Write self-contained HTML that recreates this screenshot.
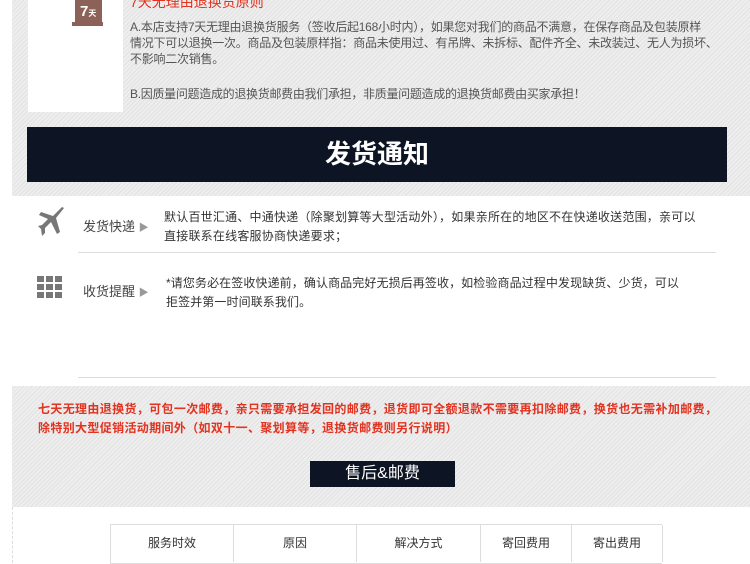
<!DOCTYPE html>
<html><head><meta charset="utf-8"><style>
body{margin:0;width:750px;height:563px;overflow:hidden;background:#fff;font-family:"Liberation Sans","Noto Sans CJK SC",sans-serif;position:relative}
.stripe{position:absolute;background:repeating-linear-gradient(135deg,#eeeeee 0 2px,#e2e2e2 2px 3px)}
.abs{position:absolute;white-space:nowrap}
.t{font-size:12px;color:#555;line-height:16px;letter-spacing:-0.3px}
.c{position:absolute;top:0;height:37px;line-height:37px;text-align:center;border-right:1px solid #ddd}
</style></head><body>
<div class="stripe" style="left:12px;top:0;width:738px;height:196px"></div>
<div class="abs" style="left:28px;top:0;width:95px;height:112px;background:#fff"></div>
<div class="abs" style="left:75px;top:0;width:27px;height:24px;background:#8c6258;border-radius:0 0 2px 2px"></div>
<div class="abs" style="left:72px;top:22px;width:31px;height:4px;background:#8c6258"></div>
<div class="abs" style="left:80px;top:3px;color:#fff;font-weight:bold;font-size:15px">7<span style="font-size:8px">天</span></div>
<div class="abs" style="left:130px;top:-8px;color:#e3321f;font-size:14px">7天无理由退换货原则</div>
<div class="abs t" style="left:130px;top:19px;letter-spacing:-0.25px">A.本店支持7天无理由退换货服务（签收后起168小时内），如果您对我们的商品不满意，在保存商品及包装原样<br>情况下可以退换一次。商品及包装原样指：商品未使用过、有吊牌、未拆标、配件齐全、未改装过、无人为损坏、<br>不影响二次销售。</div>
<div class="abs t" style="left:130px;top:86px">B.因质量问题造成的退换货邮费由我们承担，非质量问题造成的退换货邮费由买家承担！</div>
<div class="abs" style="left:27px;top:127px;width:700px;height:55px;background:#0d1424;color:#fff;font-size:26px;font-weight:bold;text-align:center;line-height:55px">发货通知</div>
<div class="abs" style="left:12px;top:196px;width:738px;height:188px;background:#fff"></div>
<svg class="abs" style="left:36px;top:206px" width="32" height="32" viewBox="0 0 32 32"><path d="M28 2 L20 12 L24 26 L21 28 L15 16 L9 22 L9 27 L6 30 L5 23 L2 20 L6 19 L12 13 L3 9 L5 6 L17 10 L26 1 Z" fill="#777"/></svg>
<svg class="abs" style="left:37px;top:276px" width="26" height="24"><g fill="#777"><rect x="0" y="0" width="7" height="6"/><rect x="9" y="0" width="7" height="6"/><rect x="18" y="0" width="7" height="6"/><rect x="0" y="8" width="7" height="6"/><rect x="9" y="8" width="7" height="6"/><rect x="18" y="8" width="7" height="6"/><rect x="0" y="16" width="7" height="6"/><rect x="9" y="16" width="7" height="6"/><rect x="18" y="16" width="7" height="6"/></g></svg>
<div class="abs" style="left:83px;top:216px;font-size:13px;color:#444">发货快递 <span style="color:#999;font-size:10px">▶</span></div>
<div class="abs" style="left:83px;top:281px;font-size:13px;color:#444">收货提醒 <span style="color:#999;font-size:10px">▶</span></div>
<div class="abs t" style="left:164px;top:208px;color:#333;line-height:19px;letter-spacing:0.22px">默认百世汇通、中通快递（除聚划算等大型活动外），如果亲所在的地区不在快递收送范围，亲可以<br>直接联系在线客服协商快递要求；</div>
<div class="abs" style="left:78px;top:252px;width:638px;border-top:1px solid #ddd"></div>
<div class="abs t" style="left:166px;top:274px;color:#333;line-height:19px;letter-spacing:0.1px">*请您务必在签收快递前，确认商品完好无损后再签收，如检验商品过程中发现缺货、少货，可以<br>拒签并第一时间联系我们。</div>
<div class="abs" style="left:78px;top:377px;width:638px;border-top:1px solid #ddd"></div>
<div class="stripe" style="left:12px;top:386px;width:738px;height:121px"></div>
<div class="abs" style="left:38px;top:400px;color:#e3321f;font-size:12px;font-weight:bold;line-height:19px;letter-spacing:0.35px">七天无理由退换货，可包一次邮费，亲只需要承担发回的邮费，退货即可全额退款不需要再扣除邮费，换货也无需补加邮费，<br>除特别大型促销活动期间外（如双十一、聚划算等，退换货邮费则另行说明）</div>
<div class="abs" style="left:310px;top:461px;width:145px;height:26px;background:#0d1424;color:#fff;font-size:16px;text-align:center;line-height:26px">售后&amp;邮费</div>
<div class="abs" style="left:12px;top:507px;width:738px;height:56px;background:#fff;border-left:1px dashed #ddd"></div>
<div class="abs" style="left:110px;top:524px;width:551px;height:38px;border:1px solid #ddd;border-right:none;font-size:12px;color:#333">
<div class="c" style="left:0;width:122px">服务时效</div>
<div class="c" style="left:123px;width:122px">原因</div>
<div class="c" style="left:246px;width:123px">解决方式</div>
<div class="c" style="left:370px;width:90px">寄回费用</div>
<div class="c" style="left:461px;width:90px">寄出费用</div>
</div>
</body></html>
